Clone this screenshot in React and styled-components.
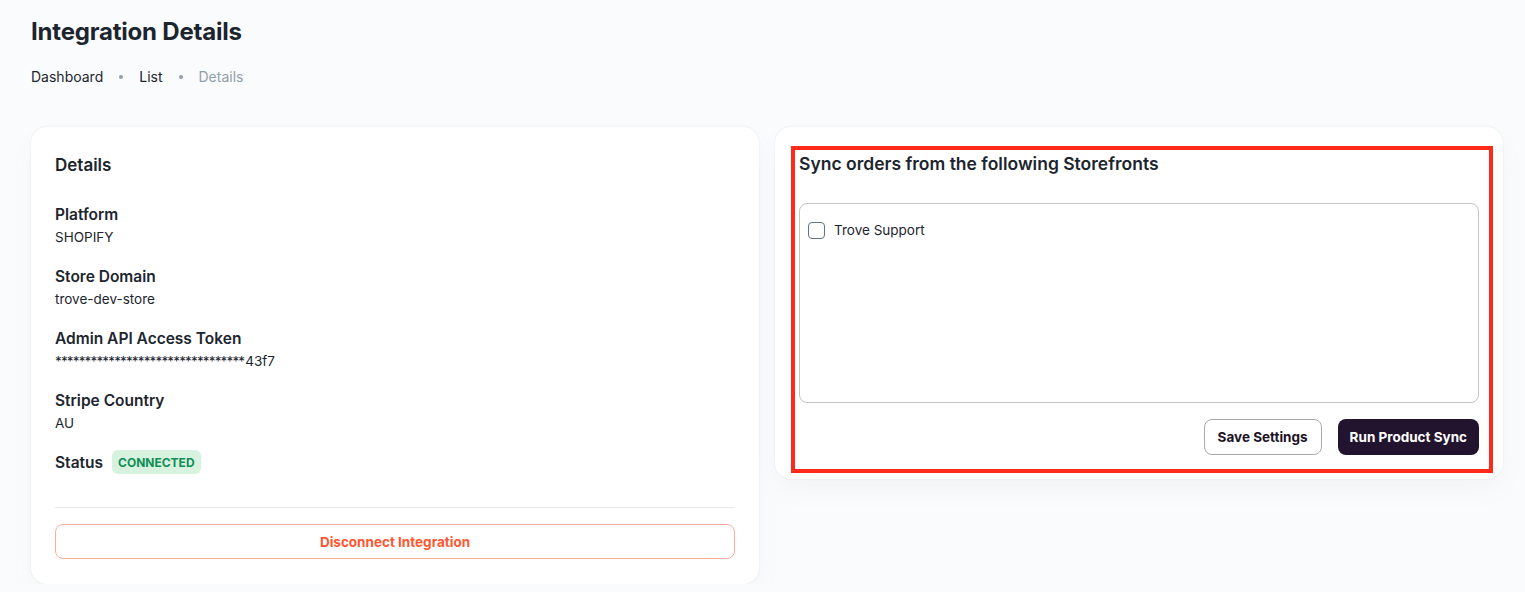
import React, { useState } from "react";
import styled, { createGlobalStyle } from "styled-components";

const GlobalStyle = createGlobalStyle`
  * { box-sizing: border-box; }
  body {
    margin: 0;
    background: #fafbfc;
    font-family: Inter, "Noto Sans", sans-serif;
    color: #1c252e;
  }
`;

// Page shell
const Page = styled.div`
  padding: 17px 22px 0 31px;
`;

const Heading = styled.h1`
  margin: 0;
  font-size: 24px;
  font-weight: 700;
  line-height: 30px;
  letter-spacing: -0.2px;
`;

const Crumbs = styled.nav`
  display: flex;
  align-items: center;
  gap: 16px;
  margin-top: 19px;
  font-size: 14px;
  line-height: 22px;
`;

const Crumb = styled.span`
  color: ${(p) => (p.$current ? "#919eab" : "#1c252e")};
`;

const Dot = styled.span`
  width: 4px;
  height: 4px;
  border-radius: 50%;
  background: #919eab;
`;

const Columns = styled.div`
  display: grid;
  grid-template-columns: 728px 728px;
  gap: 16px;
  align-items: start;
  margin-top: 39px;
`;

// Cards
const Card = styled.section`
  position: relative;
  background: #fff;
  border-radius: 16px;
  box-shadow: 0 0 2px rgba(145, 158, 171, 0.2), 0 12px 24px -4px rgba(145, 158, 171, 0.08);
  padding: ${(p) => p.$pad || "24px"};
`;

const CardTitle = styled.h2`
  margin: 0;
  font-size: ${(p) => p.$size || "17px"};
  font-weight: 600;
  line-height: 26px;
`;

const Fields = styled.dl`
  margin: 25px 0 0;
  display: flex;
  flex-direction: column;
  gap: 17px;
`;

const Field = styled.div``;

const Label = styled.dt`
  font-size: 15.5px;
  font-weight: 600;
  line-height: 23px;
`;

const Value = styled.dd`
  margin: 0;
  font-size: 13.5px;
  line-height: 22px;
`;

const Masked = styled.span`
  letter-spacing: -0.85px;
  margin-right: 1px;
`;

const StatusRow = styled.div`
  display: flex;
  align-items: center;
  gap: 9px;
  margin-top: -1px;
`;

const Badge = styled.span`
  display: inline-flex;
  align-items: center;
  height: 24px;
  padding: 0 6px;
  border-radius: 6px;
  background: #d7f3e0;
  color: #118d57;
  font-size: 12px;
  font-weight: 700;
`;

const Divider = styled.hr`
  margin: 33px 0 16px;
  border: 0;
  border-top: 1px solid #e6e8eb;
`;

const OutlineButton = styled.button`
  font-family: inherit;
  font-size: 13.5px;
  font-weight: 700;
  height: ${(p) => p.$h || "36px"};
  padding: 0 13px;
  border-radius: 8px;
  background: #fff;
  cursor: pointer;
  color: ${(p) => p.$color || "#1c1226"};
  border: 1px solid ${(p) => p.$border || "#a9a6ad"};
  width: ${(p) => (p.$block ? "100%" : "auto")};
`;

const SolidButton = styled.button`
  font-family: inherit;
  font-size: 13.5px;
  font-weight: 700;
  height: 36px;
  padding: 0 12px;
  border-radius: 8px;
  border: 0;
  background: #22132e;
  color: #fff;
  cursor: pointer;
`;

// Storefront list
const ListBox = styled.div`
  margin-top: 26px;
  height: 200px;
  border: 1px solid #c4c4c4;
  border-radius: 8px;
  padding: 15px 8px;
`;

const CheckRow = styled.label`
  display: flex;
  align-items: center;
  gap: 9px;
  font-size: 13.5px;
  line-height: 22px;
  cursor: pointer;
`;

const Box = styled.span`
  width: 17px;
  height: 17px;
  border: 1.5px solid #637381;
  border-radius: 4px;
  background: ${(p) => (p.$on ? "#22132e" : "#fff")};
`;

const Actions = styled.div`
  display: flex;
  justify-content: flex-end;
  gap: 16px;
  margin-top: 16px;
`;

// Annotation frame drawn over the right card
const Highlight = styled.div`
  position: absolute;
  left: 16px;
  right: 10px;
  top: 19px;
  bottom: 6px;
  border: 4px solid #ff2a1a;
  pointer-events: none;
`;

const App = () => {
  const [checked, setChecked] = useState(false);

  return (
    <>
      <GlobalStyle />
      <Page>
        <Heading>Integration Details</Heading>
        <Crumbs>
          <Crumb>Dashboard</Crumb>
          <Dot />
          <Crumb>List</Crumb>
          <Dot />
          <Crumb $current>Details</Crumb>
        </Crumbs>

        <Columns>
          <Card $pad="25px 24px 25px">
            <CardTitle>Details</CardTitle>
            <Fields>
              <Field>
                <Label>Platform</Label>
                <Value>SHOPIFY</Value>
              </Field>
              <Field>
                <Label>Store Domain</Label>
                <Value>trove-dev-store</Value>
              </Field>
              <Field>
                <Label>Admin API Access Token</Label>
                <Value>
                  <Masked>********************************</Masked>43f7
                </Value>
              </Field>
              <Field>
                <Label>Stripe Country</Label>
                <Value>AU</Value>
              </Field>
              <StatusRow>
                <Label>Status</Label>
                <Badge>CONNECTED</Badge>
              </StatusRow>
            </Fields>
            <Divider />
            <OutlineButton $block $h="35px" $color="#ff5630" $border="#ffac98">
              Disconnect Integration
            </OutlineButton>
          </Card>

          <Card>
            <CardTitle $size="17.5px">Sync orders from the following Storefronts</CardTitle>
            <ListBox>
              <CheckRow onClick={() => setChecked(!checked)}>
                <Box $on={checked} />
                Trove Support
              </CheckRow>
            </ListBox>
            <Actions>
              <OutlineButton>Save Settings</OutlineButton>
              <SolidButton>Run Product Sync</SolidButton>
            </Actions>
            <Highlight />
          </Card>
        </Columns>
      </Page>
    </>
  );
};

export default App;
